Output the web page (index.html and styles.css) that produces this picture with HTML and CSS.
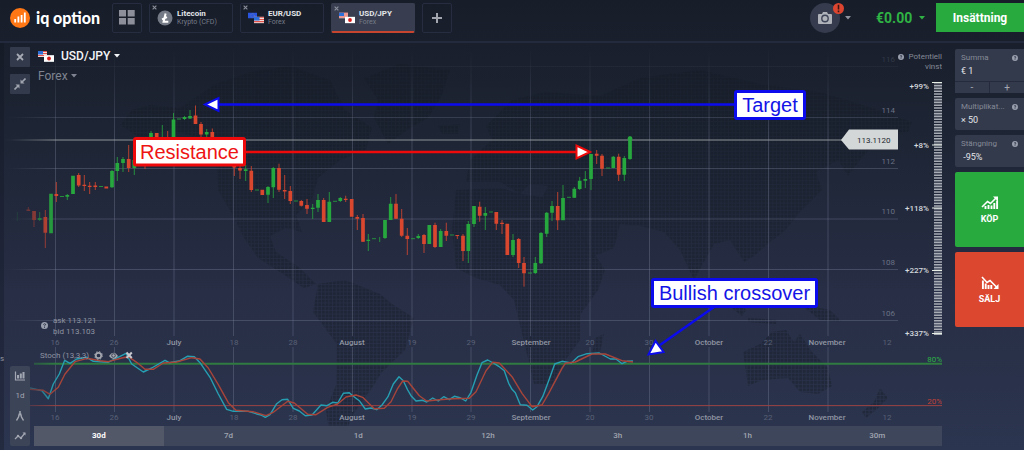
FILE: index.html
```html
<!DOCTYPE html>
<html lang="sv">
<head>
<meta charset="utf-8">
<meta name="viewport" content="width=device-width, initial-scale=1">
<title>iq option – USD/JPY</title>
<link rel="stylesheet" href="styles.css">
</head>
<body>
<svg class="sprite" aria-hidden="true">
  <symbol id="flag-us" viewBox="0 0 9 6">
    <rect width="9" height="6" fill="#f3dede"/>
    <path d="M0 .5H9M0 2.5H9M0 4.5H9" stroke="#e2534b"/>
    <rect width="5" height="3.5" fill="#2d6fd8"/>
  </symbol>
  <symbol id="flag-jp" viewBox="0 0 9 6">
    <rect width="9" height="6" fill="#fff"/>
    <circle cx="4.5" cy="3" r="1.7" fill="#d91d1d"/>
  </symbol>
  <symbol id="flag-eu" viewBox="0 0 9 6">
    <rect width="9" height="6" fill="#2a55e0"/>
    <circle cx="4.5" cy="3" r="1.8" fill="none" stroke="#a9a678" stroke-width=".6" stroke-dasharray=".6 .8"/>
  </symbol>
  <symbol id="pair-usdjpy" viewBox="0 0 16 11">
    <use href="#flag-us" width="9" height="6"/>
    <use href="#flag-jp" x="6" y="4" width="10" height="7"/>
  </symbol>
  <symbol id="pair-eurusd" viewBox="0 0 16 11">
    <use href="#flag-eu" width="9" height="6"/>
    <use href="#flag-us" x="6" y="4" width="10" height="7"/>
  </symbol>
  <symbol id="cross" viewBox="0 0 8 8"><path d="M1 1L7 7M7 1L1 7" stroke="currentColor" stroke-width="1.8"/></symbol>
  <symbol id="caret" viewBox="0 0 6 4"><path d="M0 0H6L3 3.4Z" fill="currentColor"/></symbol>
  <symbol id="help" viewBox="0 0 6 6"><circle cx="3" cy="3" r="3" fill="#9a9fad"/><path d="M2 2.2Q3 .9 4 2Q4 2.7 3 3.2V3.8M3 4.3V5" fill="none" stroke="#2a3145" stroke-width=".8"/></symbol>
</svg>

<header class="topbar">
  <a class="logo" href="#">
    <svg class="logo-mark" viewBox="0 0 20 20" aria-hidden="true">
      <circle cx="10" cy="10" r="10" fill="#ff7614"/>
      <path d="M5.2 11V14.4M8.4 8.5V14.4M11.6 7V14.4M14.8 4.6V14.4" stroke="#fff" stroke-width="1.8"/>
    </svg>
    <span>iq option</span>
  </a>
  <nav class="tabs" aria-label="Tillgångar">
    <button class="square" aria-label="Alla diagram">
      <svg class="icon-grid" viewBox="0 0 16 15" aria-hidden="true"><path d="M0 0h7v6.500h-7zM8.700 0h7v6.500h-7zM0 8h7v6.500h-7zM8.700 8h7v6.500h-7z" fill="#8d909b"/></svg>
    </button>
    <button class="tab">
      <svg class="tab-close" aria-hidden="true"><use href="#cross"/></svg>
      <svg class="tab-icon" viewBox="0 0 16 16" aria-hidden="true"><circle cx="8" cy="8" r="7.500" fill="#757b86"/><path d="M8.600 3.500L6.600 11.700H11.300M5 9.300L10 7.200" fill="none" stroke="#fff" stroke-width="2"/></svg>
      <span class="tab-text"><b>Litecoin</b><small>Krypto (CFD)</small></span>
    </button>
    <button class="tab">
      <svg class="tab-close" aria-hidden="true"><use href="#cross"/></svg>
      <svg class="tab-icon" aria-hidden="true"><use href="#pair-eurusd"/></svg>
      <span class="tab-text"><b>EUR/USD</b><small>Forex</small></span>
    </button>
    <button class="tab tab-active">
      <svg class="tab-close" aria-hidden="true"><use href="#cross"/></svg>
      <svg class="tab-icon" aria-hidden="true"><use href="#pair-usdjpy"/></svg>
      <span class="tab-text"><b>USD/JPY</b><small>Forex</small></span>
    </button>
    <button class="square" aria-label="Lägg till">
      <svg class="icon-plus" viewBox="0 0 10 10" aria-hidden="true"><path d="M5 0V10M0 5H10" stroke="#a3a6af" stroke-width="2"/></svg>
    </button>
  </nav>
  <button class="profile" aria-label="Profil">
    <span class="avatar">
      <svg class="icon-camera" viewBox="0 0 14 12" aria-hidden="true"><path d="M1 2H4L5 0H9L10 2H13Q14 2 14 3V11Q14 12 13 12H1Q0 12 0 11V3Q0 2 1 2Z" fill="#b0b2ba"/><circle cx="7" cy="6.500" r="3.200" fill="none" stroke="#3f4558" stroke-width="1.400"/></svg>
      <svg class="badge" viewBox="0 0 10 10" aria-hidden="true"><circle cx="5" cy="5" r="5" fill="#dc4530"/><path d="M5 1.700V5.800M5 6.800V8.300" stroke="#3a1512" stroke-width="1.400"/></svg>
    </span>
    <svg class="caret" aria-hidden="true"><use href="#caret"/></svg>
  </button>
  <label class="balance">
    <select aria-label="Saldo"><option>€0.00</option></select>
    <svg class="caret" aria-hidden="true"><use href="#caret"/></svg>
  </label>
  <button class="deposit">Insättning</button>
</header>

<main class="workspace">
  <section class="stage">
    <svg class="chart" viewBox="0 43 942 407" role="img" aria-label="USD/JPY med Stochastic">
      <defs>
        <pattern id="dots" width="3.7" height="3.7" patternUnits="userSpaceOnUse"><rect width="2.900" height="2.900" fill="#141b24"/></pattern>
        <linearGradient id="fade"><stop offset="0" stop-color="#000"/><stop offset=".012" stop-color="#111"/><stop offset=".06" stop-color="#fff"/></linearGradient>
        <mask id="edge" maskUnits="userSpaceOnUse" x="0" y="40" width="942" height="410"><rect y="40" width="942" height="410" fill="url(#fade)"/></mask>
        <linearGradient id="topfade" x2="0" y2="1"><stop offset="0" stop-color="#000"/><stop offset=".25" stop-color="#fff"/></linearGradient>
        <mask id="top" maskUnits="userSpaceOnUse" x="0" y="46" width="942" height="370"><rect y="46" width="942" height="370" fill="url(#topfade)"/></mask>
      </defs>
      <rect y="43" width="4" height="407" fill="#0f1420" opacity=".3"/>

      <!-- world map -->
      <g class="map" fill="url(#dots)">
        <path d="M120 125L132 110L150 105L180 108L215 84L250 72L290 66L330 80L345 110L372 128L366 150L340 160L318 178L312 200L296 215L302 232L286 228L270 236L276 252L300 268L316 284L304 288L280 272L258 258L244 238L232 214L218 190L216 160L200 138L170 130L140 138Z"/>
        <path d="M364 78L400 64L450 70L442 95L428 118L410 128L388 144L374 118L378 100Z"/>
        <path d="M438 126L460 124L458 134L442 134Z"/>
        <path d="M318 284L345 280L380 294L392 304L414 318L405 350L382 372L372 388L360 404L350 420L345 441L330 438L326 410L336 385L337 344L322 324L313 312Z"/>
        <path d="M456 190L500 188L522 194L560 200L578 228L605 270L598 290L580 315L580 340L562 365L552 384L534 384L526 350L520 325L514 300L500 285L476 278L456 268L452 230Z"/>
        <path d="M595 338L604 334L600 352L592 354Z"/>
        <path d="M466 182L470 160L492 140L486 126L512 100L545 92L600 96L640 78L700 70L760 84L820 92L860 104L912 122L908 132L880 138L860 160L848 176L838 160L816 172L822 190L800 212L784 232L770 242L754 256L744 262L730 240L714 244L694 280L680 250L664 232L640 226L620 224L614 248L590 258L578 226L566 210L540 202L548 186L530 184L520 194L500 182Z"/>
        <path d="M712 282L730 292L746 310L742 316L724 302ZM752 288L772 280L778 296L764 306ZM748 318L778 320L776 324L748 322ZM800 304L830 310L842 322L820 320Z"/>
        <path d="M743 352L760 344L772 332L786 330L794 342L800 334L812 352L828 368L832 386L818 394L800 392L788 378L762 380L748 386Z"/>
        <path d="M880 388L888 398L876 410L866 418L862 412L874 402Z"/>
      </g>

      <!-- grid -->
      <g mask="url(#edge)">
        <g class="grid" mask="url(#top)">
          <path d="M55.500 46V336M114.500 46V336M174 46V336M233.500 46V336M293 46V336M352.500 46V336M412 46V336M471 46V336M530.500 46V336M590 46V336M649.500 46V336M709 46V336M768.500 46V336M828 46V336"/>
          <path d="M55.500 347V412M114.500 347V412M174 347V412M233.500 347V412M293 347V412M352.500 347V412M412 347V412M471 347V412M530.500 347V412M590 347V412M649.500 347V412M709 347V412M768.500 347V412M828 347V412"/>
          <path d="M4 66.500H898M4 117.500H898M4 168.500H898M4 219H898M4 269.500H898M4 320.500H898"/>
        </g>
        <path class="price-line" d="M4 140H842"/>
        <path class="level-high" d="M34 363.800H942"/>
        <path class="level-low" d="M30 405.600H942"/>

        <!-- candles -->
        <path class="up wick" d="M17.300 212V221M39.700 212V221M67.300 194V200M112 170V188M117.300 157V181M123 157V172M134.300 155V175M151 131V137M162.300 125V140M173.500 113V137M184.500 116V120M190 110V119M206.700 129V137M245.700 165V181M268 186V203M273.300 167V198M312.700 204V219M318 194V212M329.300 192V222M340.300 197V202M368.300 234V251M379.700 237V242M385 220V239M390.700 197V220M418.300 234V239M440.700 229V247M468.300 221V263M474 206V227M485.300 207V230M513 234V257M535.300 257V274M541 232V264M546.700 212V237M552 201V221M563 185V220M574.300 187V198M579.700 177V190M585.300 171V188M591 154V190M613.300 156V168M624.300 156V181M630 136V160"/>
        <path class="up wick" d="M60 196.500H64M99 186.500H103M177 119H181M255 190H259M294 201H298M333 201.300H337M372 238.700H376M411 238.700H415M450 235H454M489 212H493M528 273H532M567 197.300H571M606 168H610"/>
        <path class="up candle" d="M39.700 218V220M51 193.700V233.300M67.300 195V196.700M73 175.700V194M112 171V187.300M117.300 163V171M123 159V163M134.300 160V168M151 133V137M173.500 119.500V137M184.500 117V119M190 116V118.500M206.700 132V134.500M245.700 169.300V171M268 187V194.700M273.300 168V187.300M312.700 207.700V209M318 200V207.700M329.300 201.700V222M340.300 198V201M368.300 239.700V241M385 220V238M390.700 203.700V220M418.300 236V238M429.300 225V244M440.700 231V247M468.300 224V251M474 206V224M485.300 213V215.700M513 240V255M535.300 263V273M541 233V263.300M546.700 212.700V233.700M552 206V212.700M563 198V220.300M574.300 188.700V197.700M579.700 180.700V189M585.300 179V180.700M591 154V179M613.300 156.700V168M624.300 158V174.700M630 137.700V159"/>
        <path class="down wick" d="M28.300 207V211M34 211V227M45.300 210V248M56.300 182V202M78.700 173V187M84.300 175V191M89.700 182V194M95.300 182V190M128.700 145V172M145 160V169M167.700 131V140M195.500 105.500V124M201 122V137M212.300 128.500V139M234.300 160V176M240 166V179M251.300 166V192M279 163.700V192M284.700 175V199M290.300 186V204M301.300 200V206.500M307 199V214M323.700 198V222M345.700 195.700V202M357.300 215V230M363 214V242M396 194V219M401.700 209V237M407.300 228V255M424 234V253M435 222.700V248M446.300 222.700V241M457.300 235V239M463 234V261M479.700 201.700V221.700M496.300 212V230M502 220V234M518.700 238V268M524 257V286.700M557.700 192V230M596.700 150V164M602 154V176M618.700 153.700V181"/>
        <path class="down candle" d="M28.300 209.500V211M34 211V220M45.300 217V232.700M56.300 194V196M78.700 175V185.500M84.300 184.700V186M89.700 185.800V187M95.300 185.500V187M106.300 186.500V188.500M128.700 159V168M156.700 133V139M195.500 115.500V124M201 124V134.500M212.300 132V139M218 139V148M223.700 148V156M229 154V163M234.300 160V167.500M240 168V170.500M251.300 170.700V190M262.300 189.700V195M279 168V189.700M284.700 190V191.500M290.300 191V201M301.300 201V205.700M307 205V208.700M323.700 200V222M345.700 198.700V200M351.700 199V216.700M357.300 217V218.700M363 218V241.700M396 203.700V218.700M401.700 218.700V235.700M407.300 235.700V239M424 235V244M435 225V247M446.300 231V235.700M457.300 235V236M463 235.700V251M479.700 206.700V215.700M496.300 212V223.700M502 222.700V224M507.300 223.700V255M518.700 239V263M524 263V273.300M557.700 206V220.300M596.700 153.700V155.700M602 155.700V168.700M618.700 156.700V174.700"/>
        <circle cx="630" cy="138.700" r="2.400" fill="#27a83e"/>

        <!-- stochastic -->
        <polyline class="stoch-k" points="30,388 42,390.700 48.300,398.700 53.300,384 59.300,374 64.700,360.300 70,363.300 76.700,359 86.700,357.300 93.300,361.300 108,362.300 126,353.300 131.700,364 143.300,372 151.700,368 165,360.300 169.300,362.700 180,360.700 187.300,356.300 194.300,356.700 200,362.700 210,377.300 218.300,394 226.700,409.300 233.300,411.300 248.300,411.300 256,413.700 261,415 265.300,417.300 270,414.700 276.700,403.700 282,399.700 287.700,399.300 293.300,408.300 299.300,411 305.300,415.700 312,415 321,405 327,405.700 332.700,402.300 337.700,403 343.300,393.300 349.300,392.700 353.300,396.300 359.300,400.700 365.300,409 371,408 376.700,409.700 382,405 388,396.700 393.300,384 399,376.700 403.300,380.700 407.700,390 411,395.700 416,401 422.700,400.300 426.700,402 432.700,398 438.300,401 443.700,396.700 449.300,399.700 454.300,396.300 460,397.700 465.700,401 471,392.300 477,375 482,362.700 487.700,360 493.300,363 498.700,366.300 504.300,370.700 508.700,383.300 512,389.300 515.300,392.700 520.300,404.700 527,405.300 532.700,410 537,406.700 542.700,396.700 548.700,380.700 554.700,364 562,361.300 571.300,363 578,356.700 587,353.700 599.300,353 610.300,359 616,359 622,363.700 627,361.300 633,361"/>
        <polyline class="stoch-d" points="30,389.300 43.300,390.300 50,394.300 58.300,387.300 65,374 75,361.700 87.300,358.300 100,360.700 108.300,361.700 121.700,358 128.300,356.700 136.700,362.300 145,369.300 153.300,369.300 163.300,363 176.700,362 191.700,357.700 200,359 208.300,368 218.300,384.700 228.300,402.700 236,410.300 253,411.700 266,415.700 272.700,412.700 287.700,401.300 294.300,403 307.700,414.300 316,414.700 327.700,407.300 337.700,404 346,397 356,395 362.700,397.300 374.300,408.700 384.300,408.300 391,401.700 397.700,388.300 402.700,381 407.700,381.300 419.300,395.700 426.700,401 439.300,399.700 452.700,398.700 469.300,398.300 476,391.700 486,370.700 492.700,362.300 499.300,363 512,376.700 522,393.300 532,406.700 542,405 548.700,393.300 562,368.300 565.300,363.300 575.300,362 592,354 605.300,354 622,360.700 633,362"/>
      </g>

      <!-- date axes -->
      <g class="days"><text x="55" y="345">16</text><text x="114" y="345">26</text><text x="234" y="345">18</text><text x="293" y="345">28</text><text x="412" y="345">19</text><text x="471" y="345">29</text><text x="590" y="345">20</text><text x="649" y="345">30</text><text x="768" y="345">22</text><text x="887" y="345">12</text>
        <text x="55" y="420">16</text><text x="114" y="420">26</text><text x="234" y="420">18</text><text x="293" y="420">28</text><text x="412" y="420">19</text><text x="471" y="420">29</text><text x="590" y="420">20</text><text x="649" y="420">30</text><text x="768" y="420">22</text><text x="887" y="420">12</text></g>
      <g class="months"><text x="174" y="345">July</text><text x="352" y="345">August</text><text x="531" y="345">September</text><text x="709" y="345">October</text><text x="827" y="345">November</text>
        <text x="174" y="420">July</text><text x="352" y="420">August</text><text x="531" y="420">September</text><text x="709" y="420">October</text><text x="827" y="420">November</text></g>

      <!-- price axis -->
      <g class="prices"><text class="dim" x="895" y="62">116</text><text x="895" y="113">114</text><text x="895" y="164">112</text><text x="895" y="214">110</text><text x="895" y="265">108</text><text x="895" y="316">106</text></g>
      <path d="M841 140L849 129.500H898V149.500H849Z" fill="#d3d7d7"/>
      <text class="price-tag" x="857" y="143">113.1120</text>

      <!-- potential profit scale -->
      <use href="#help" x="898" y="54" width="6" height="6"/>
      <g class="profit-title"><text x="942" y="59">Potentiell</text><text x="942" y="69">vinst</text></g>
      <path d="M938 82V335" stroke="#a8acb5" stroke-width="8" stroke-dasharray="1.600 1.200"/>
      <path d="M932 82.500H942M932 145H942M932 208H942M932 270.500H942M932 333.500H942" stroke="#e6eee6" stroke-width="1.200"/>
      <g class="profit"><text x="929" y="89">+99%</text><text x="929" y="148">+8%</text><text x="929" y="211">+118%</text><text x="929" y="273">+227%</text><text x="929" y="336">+337%</text></g>
      <g class="level-text"><text x="942" y="362" fill="#2bb344">80%</text><text x="942" y="404" fill="#c04138">20%</text></g>

      <!-- quotes and indicator legend -->
      <use href="#help" x="41" y="322" width="7" height="7"/>
      <g class="legend"><text x="53" y="323">ask 113.121</text><text x="53" y="334">bid 113.103</text><text x="40" y="358">Stoch (13,3,3)</text><text x="0" y="361">s</text></g>
      <circle cx="98.500" cy="355.500" r="2.700" fill="none" stroke="#a4a7af" stroke-width="1.700"/>
      <circle cx="98.500" cy="355.500" r="3.900" fill="none" stroke="#a4a7af" stroke-dasharray="1.500 1.560"/>
      <path d="M109 356Q113.500 349.500 118 356Q113.500 362 109 356Z" fill="#a4a7af"/><circle cx="113.500" cy="355.500" r="1.800" fill="none" stroke="#3a4256"/>
      <path d="M126.500 352.500L131.800 358M131.800 352.500L126.500 358" stroke="#c7c9ce" stroke-width="2"/>

      <!-- annotations -->
      <g class="note blue">
        <path d="M735 104.500H217M714 307L660 345"/>
        <path class="head" d="M205 104.500L218.500 98V111Z"/>
        <path class="head" d="M648.500 354.500L655.500 341L663.500 352Z"/>
        <rect x="735.500" y="91.500" width="69" height="27" rx="1.500"/><text x="770" y="112">Target</text>
        <rect x="652.500" y="279.500" width="164" height="27" rx="1.500"/><text x="734.500" y="300">Bullish crossover</text>
      </g>
      <g class="note red">
        <path d="M245 152H578"/>
        <path class="head" d="M590 152L576.500 145.500V158.500Z"/>
        <rect x="134.500" y="138.500" width="110" height="26.500" rx="1.500"/><text x="189.500" y="159">Resistance</text>
      </g>
    </svg>

    <div class="overlay">
      <div class="instrument">
        <button class="tool solo" aria-label="Stäng"><svg class="icon-cross" aria-hidden="true"><use href="#cross"/></svg></button>
        <label class="pick pick-pair"><svg class="pair-icon" aria-hidden="true"><use href="#pair-usdjpy"/></svg><select aria-label="Tillgång"><option>USD/JPY</option></select><svg class="caret" aria-hidden="true"><use href="#caret"/></svg></label>
        <button class="tool solo" aria-label="Minimera"><svg class="icon" viewBox="0 0 12 12" aria-hidden="true"><path d="M11.500 .5L8 4M.5 11.500L4 8" stroke="#a0a4af" stroke-width="1.600"/><path d="M6.500 1.500V5.500H10.500ZM5.500 10.500V6.500H1.500Z" fill="#a0a4af"/></svg></button>
        <label class="pick pick-type"><select aria-label="Typ"><option>Forex</option></select><svg class="caret" aria-hidden="true"><use href="#caret"/></svg></label>
      </div>
      <div class="bottom">
        <div class="tools">
          <button class="tool" aria-label="Diagramtyp"><svg class="icon" viewBox="0 0 12 12" aria-hidden="true"><path d="M1.500 1.500V10H11" fill="none" stroke="#a3a7b1" stroke-width="1.200"/><path d="M4 5V8.500M6.800 3.500V8.500M9.500 2V8.500" stroke="#a3a7b1" stroke-width="2"/></svg></button>
          <button class="tool">1d</button>
          <button class="tool" aria-label="Ritverktyg"><svg class="icon" viewBox="0 0 12 12" aria-hidden="true"><path d="M6 1V4M5.500 3.500L4.500 7L2.500 10.500M6.500 3.500L7.500 7L9.500 10.500" fill="none" stroke="#a3a7b1" stroke-width="1.500"/></svg></button>
          <button class="tool" aria-label="Indikatorer"><svg class="icon" viewBox="0 0 12 12" aria-hidden="true"><path d="M1 9L4 6L7 8L11 3" fill="none" stroke="#a3a7b1" stroke-width="1.300"/><circle cx="4" cy="6" r="1.200" fill="#a3a7b1"/><circle cx="7" cy="8" r="1.200" fill="#a3a7b1"/><path d="M8.500 2.500H11.500V5.500Z" fill="#a3a7b1"/></svg></button>
        </div>
        <div class="ranges">
          <button class="range range-active">30d</button><button class="range">7d</button><button class="range">1d</button><button class="range">12h</button><button class="range">3h</button><button class="range">1h</button><button class="range">30m</button>
        </div>
      </div>
    </div>
  </section>

  <aside class="order">
    <div class="card">
      <div class="card-head"><label for="sum">Summa</label><svg class="help" aria-hidden="true"><use href="#help"/></svg></div>
      <input id="sum" type="text" value="€ 1">
      <div class="stepper"><button>-</button><button>+</button></div>
    </div>
    <div class="card">
      <div class="card-head"><label for="mult">Multiplikat...</label><svg class="help" aria-hidden="true"><use href="#help"/></svg></div>
      <input id="mult" type="text" value="× 50">
    </div>
    <div class="card">
      <div class="card-head"><label for="close">Stängning</label><svg class="help" aria-hidden="true"><use href="#help"/></svg></div>
      <input id="close" type="text" value=" -95%">
    </div>
    <button class="trade buy">
      <svg class="icon-trade" viewBox="0 0 18 13" aria-hidden="true"><path d="M1 11L6.500 5.500L9.500 7.500L15 2" fill="none" stroke="#fff" stroke-width="1.600"/><path d="M12 .5H17V5.500Z" fill="#fff"/><path d="M4.500 10V13M7.500 9V13M10.500 9.500V13M13.300 7V13M16.100 4.500V13" stroke="#fff" stroke-width="1.900"/></svg>
      KÖP
    </button>
    <button class="trade sell">
      <svg class="icon-trade" viewBox="0 0 18 13" aria-hidden="true"><path d="M1 1L6 6.500L9 4.500L16.500 12" fill="none" stroke="#fff" stroke-width="1.600"/><path d="M17.500 8V13H12.500Z" fill="#fff"/><path d="M1.900 4.500V13M4.700 7.500V13M7.500 9V13M10.300 9V13" stroke="#fff" stroke-width="1.900"/></svg>
      SÄLJ
    </button>
  </aside>
</main>
</body>
</html>
```
FILE: styles.css
```css
* { box-sizing: border-box; }

body {
  margin: 0;
  min-height: 100vh;
  display: flex;
  flex-direction: column;
  background: linear-gradient(#171d29 0, #1a202d 14%, #1e2535 32%, #272e45 65%, #2c354f 100%);
  color: #e4e6ea;
  font: 8px/10px Roboto, "Liberation Sans", sans-serif;
}

button, input, select {
  margin: 0;
  padding: 0;
  border: 0;
  border-radius: 0;
  background: none;
  color: inherit;
  font: inherit;
  appearance: none;
}

button, select { cursor: pointer; }
.sprite { display: none; }
.caret { width: 6px; height: 4px; flex: none; }

/* top bar */
.topbar {
  display: flex;
  align-items: center;
  height: 43px;
  padding: 0 0 6px 10px;
  border-bottom: 2px solid #242a3d;
}

.logo {
  display: flex;
  align-items: center;
  gap: 6px;
  width: 102px;
  color: #fff;
  font: 900 16px/20px Lato, sans-serif;
  text-decoration: none;
  white-space: nowrap;
}

.logo-mark { width: 20px; height: 20px; flex: none; }
.tabs { display: flex; gap: 7px; margin-right: auto; }

.square, .tab {
  height: 30px;
  border: 1px solid #272d40;
  border-radius: 2px;
}

.square {
  display: grid;
  place-items: center;
  width: 30px;
}

.icon-grid { width: 16px; height: 15px; }
.icon-plus { width: 10px; height: 10px; }

.tab {
  display: flex;
  align-items: center;
  width: 84px;
  padding-left: 2px;
  text-align: left;
}

.tab-active {
  padding-top: 1px;
  background: #383e4f;
  border-color: #383e4f;
  border-bottom: 2px solid #c7452f;
}

.tab-close { width: 5px; height: 5px; align-self: flex-start; margin-top: 1px; color: #8b8f9b; }
.tab-icon { width: 16px; height: 16px; flex: none; }
.tab-text { display: flex; flex-direction: column; margin-left: 4px; line-height: 9px; }
.tab-text b { font-weight: 700; color: #e4e6ea; }
.tab-text small { font-size: 7px; color: #757b88; }

.profile { display: flex; align-items: center; gap: 5px; margin-right: 25px; color: #8f939e; }

.avatar {
  position: relative;
  display: grid;
  place-items: center;
  width: 30px;
  height: 30px;
  border-radius: 50%;
  background: #363c4d;
}

.icon-camera { width: 14px; height: 12px; }
.badge { position: absolute; top: 0; right: -4px; width: 11px; height: 11px; }

.balance {
  display: flex;
  align-items: center;
  gap: 6px;
  margin-right: 11px;
  color: #2fb344;
  font-size: 14px;
  font-weight: 700;
  line-height: 18px;
}

.deposit {
  width: 88px;
  height: 29px;
  background: #29aa3f;
  color: #fff;
  font-size: 12px;
  font-weight: 700;
}

/* workspace */
.workspace { display: flex; flex: 1; gap: 13px; align-items: flex-start; }

.stage {
  display: grid;
  flex: 1;
  min-width: 0;
}

.chart, .overlay { grid-area: 1 / 1; }
.chart { display: block; width: 100%; height: auto; }

.overlay {
  display: flex;
  flex-direction: column;
  justify-content: space-between;
  padding: 4px 0 4px 10px;
}

.instrument {
  display: grid;
  grid-template-columns: 20px max-content;
  align-items: center;
  gap: 7px 8px;
}

.tool {
  display: grid;
  place-items: center;
  width: 20px;
  height: 20px;
  color: #a3a7b1;
}

.solo { background: #333a4b; border-radius: 1px; }
.icon { width: 12px; height: 12px; }
.icon-cross { width: 8px; height: 8px; color: #a7abb5; }
.pick { display: flex; align-items: center; font-size: 12px; line-height: 14px; gap: 3px; }
.pick-pair { align-self: start; color: #f4f5f7; font-weight: 500; }
.pair-icon { width: 16px; height: 11px; margin-right: 4px; }
.pick-type { align-self: start; height: 4px; color: #7f8490; font-size: 12px; }
.pick-pair { height: 18px; }

.bottom { display: flex; align-items: flex-end; gap: 4px; }
.tools { background: #3c4458; border-radius: 2px; }
.ranges { display: flex; flex: 1; background: #3e465b; }
.range { flex: 1; height: 20px; color: #a0a5b0; font-weight: 500; }
.range-active { background: #535869; color: #fff; font-weight: 700; }

/* chart drawing */
.map { opacity: .42; }
.grid { stroke: #79829a; stroke-opacity: .36; fill: none; }
.price-line { stroke: #a3a8a9; stroke-opacity: .85; }
.level-high { stroke: #2f7b40; stroke-width: 2; }
.level-low { stroke: #9a4343; }
.wick, .candle { fill: none; }
.candle { stroke-width: 3.7; }
.up { stroke: #27a83e; }
.down { stroke: #d9472f; }
.wick { stroke-opacity: .8; }
.stoch-k, .stoch-d { fill: none; stroke-width: 1.4; stroke-linejoin: round; }
.stoch-k { stroke: #279fb2; }
.stoch-d { stroke: #a8453a; }
.chart text { font-size: 8px; }
.days text, .months text { text-anchor: middle; }
.days { fill: #596176; }
.months { fill: #9196a3; font-weight: 500; }
.prices { fill: #6b7285; text-anchor: end; }
.prices .dim { fill: #333a49; }
.price-tag { fill: #22262e; }
.profit-title { fill: #858a97; text-anchor: end; }
.profit { fill: #d6d9de; text-anchor: end; font-weight: 500; }
.level-text { text-anchor: end; }
.legend { fill: #8f94a1; }

.note path { fill: none; stroke-width: 2.5; }
.note rect { fill: #fff; stroke-width: 3; }
.note .head { fill: #fff; stroke-width: 2; }
.chart .note text { font: 20px "Liberation Sans", Arial, sans-serif; text-anchor: middle; }
.blue { stroke: #0b0bee; }
.blue text { fill: #1414e6; stroke: none; }
.red { stroke: #ee0a0a; }
.red text { fill: #ee1414; stroke: none; }

/* order panel */
.order {
  display: flex;
  flex-direction: column;
  gap: 5px;
  width: 69px;
  padding-top: 6px;
}

.card { background: #333a4c; border-radius: 2px 0 0 2px; padding-top: 4px; }

.card-head {
  display: flex;
  align-items: center;
  justify-content: space-between;
  padding: 0 6px;
  color: #858a97;
  line-height: 10px;
}

.help { width: 6px; height: 6px; flex: none; }

.card input {
  display: block;
  width: 100%;
  height: 18px;
  padding: 0 6px 2px;
  font-size: 9px;
  white-space: pre;
}

.stepper { display: flex; gap: 1px; border-top: 1px solid #252b3c; background: #252b3c; }
.stepper button { flex: 1; height: 11px; background: #333a4c; color: #a3a7b1; font-size: 10px; line-height: 10px; }

.trade {
  display: flex;
  flex-direction: column;
  align-items: center;
  justify-content: center;
  gap: 5px;
  height: 75px;
  border-radius: 2px 0 0 2px;
  color: #fff;
  font-size: 9px;
  font-weight: 700;
}

.buy { background: #29aa3f; }
.sell { background: #db482f; }
.icon-trade { width: 18px; height: 13px; }
```
